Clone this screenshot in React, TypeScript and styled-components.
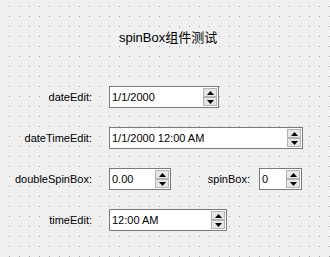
import React from "react";
import styled, { createGlobalStyle } from "styled-components";

const GlobalStyle = createGlobalStyle`
  html, body {
    margin: 0;
    padding: 0;
    background: #f0f0f0;
  }
  body {
    font-family: "Liberation Sans", "Noto Sans CJK SC", sans-serif;
    font-size: 11px;
    color: #000;
  }
`;

const Form = styled.div`
  width: 330px;
  height: 257px;
  box-sizing: border-box;
  padding-top: 29px;
  background-color: #f0f0f0;
  /* designer grid: one dot every 10px */
  background-image: linear-gradient(90deg, #f0f0f0 9px, transparent 9px),
    linear-gradient(#f0f0f0 9px, #a0a0a0 9px);
  background-size: 10px 10px;
  background-position: 0 7px;
`;

const Title = styled.div`
  height: 17px;
  line-height: 17px;
  font-size: 13px;
  font-family: "Liberation Sans", "Noto Sans CJK SC", sans-serif;
  padding-left: 119px;
  margin-bottom: 40px;
`;

const Rows = styled.div`
  display: flex;
  flex-direction: column;
  gap: 19px;
`;

const Row = styled.div`
  display: flex;
  align-items: center;
  height: 22px;
`;

const Label = styled.label<{ $width: number; $gap?: number }>`
  width: ${(p) => p.$width}px;
  margin-right: ${(p) => p.$gap ?? 17}px;
  text-align: right;
  flex: none;
  white-space: nowrap;
`;

const Box = styled.div<{ $width: number }>`
  width: ${(p) => p.$width}px;
  height: 22px;
  box-sizing: border-box;
  border: 1px solid #7a7a7a;
  background: #fff;
  display: flex;
  align-items: stretch;
  flex: none;
`;

const Value = styled.div`
  flex: 1;
  padding-left: 2px;
  line-height: 20px;
  white-space: nowrap;
  overflow: hidden;
`;

const Buttons = styled.div`
  width: 14px;
  margin: 1px;
  display: flex;
  flex-direction: column;
`;

const Step = styled.div`
  flex: 1;
  box-sizing: border-box;
  border: 1px solid #b4b4b4;
  background: #e6e6e6;
  display: flex;
  align-items: center;
  justify-content: center;
`;

const Arrow = ({ up }: { up?: boolean }) => (
  <svg width="7" height="4" viewBox="0 0 7 4">
    <path d={up ? "M0 4 L3.5 0 L7 4 Z" : "M0 0 L7 0 L3.5 4 Z"} fill="#000" />
  </svg>
);

function SpinBox({ width, value }: { width: number; value: string }) {
  return (
    <Box $width={width}>
      <Value>{value}</Value>
      <Buttons>
        <Step>
          <Arrow up />
        </Step>
        <Step>
          <Arrow />
        </Step>
      </Buttons>
    </Box>
  );
}

export default function App() {
  return (
    <>
      <GlobalStyle />
      <Form>
        <Title>spinBox组件测试</Title>
        <Rows>
          <Row>
            <Label $width={92}>dateEdit:</Label>
            <SpinBox width={110} value="1/1/2000" />
          </Row>
          <Row>
            <Label $width={92}>dateTimeEdit:</Label>
            <SpinBox width={194} value="1/1/2000 12:00 AM" />
          </Row>
          <Row>
            <Label $width={92}>doubleSpinBox:</Label>
            <SpinBox width={62} value="0.00" />
            <Label $width={79} $gap={9}>
              spinBox:
            </Label>
            <SpinBox width={43} value="0" />
          </Row>
          <Row>
            <Label $width={92}>timeEdit:</Label>
            <SpinBox width={118} value="12:00 AM" />
          </Row>
        </Rows>
      </Form>
    </>
  );
}
